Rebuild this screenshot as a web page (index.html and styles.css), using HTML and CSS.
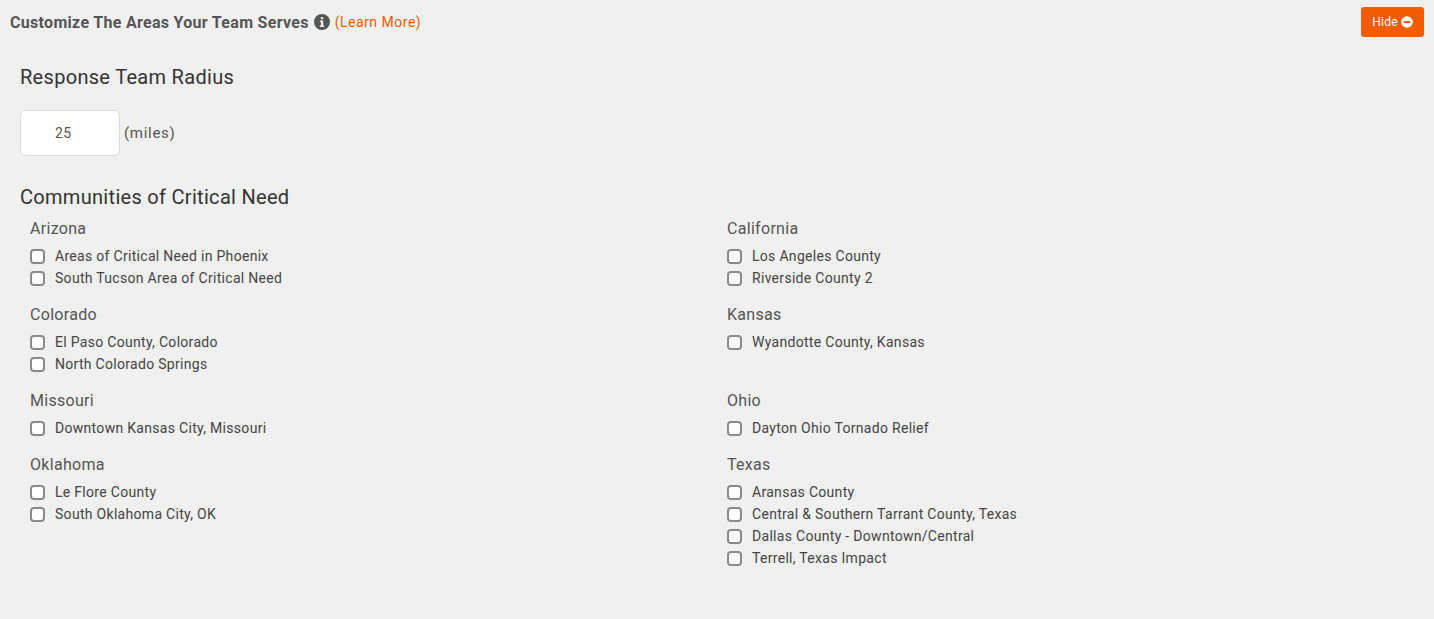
FILE: index.html
```html
<!DOCTYPE html>
<html lang="en">
<head>
  <meta charset="UTF-8" />
  <title>Customize The Areas Your Team Serves</title>
  <link rel="stylesheet" href="styles.css">
</head>
<body>
  <header class="bar">
    <div class="bar-title">
      <strong>Customize The Areas Your Team Serves</strong>
      <svg class="info-icon" viewBox="0 0 16 16" width="16" height="16">
        <circle cx="8" cy="8" r="8" fill="#555"/>
        <rect x="6.9" y="3" width="2.3" height="2.3" rx=".5" fill="#f0f0f0"/>
        <path d="M5.9 6.6h3.3v4.9h1v1.5H5.9v-1.5h1V8.1h-1z" fill="#f0f0f0"/>
      </svg>
      <a href="#" class="learn">(Learn More)</a>
    </div>
    <button class="hide-btn">Hide
      <svg viewBox="0 0 12 12" width="12" height="12">
        <circle cx="6" cy="6" r="5.8" fill="#fff"/>
        <rect x="2.6" y="4.9" width="6.8" height="2.2" rx=".4" fill="#f25c05"/>
      </svg>
    </button>
  </header>

  <main class="content">
    <h2 class="radius-title">Response Team Radius</h2>
    <div class="radius-row">
      <input type="text" class="radius-input" value="25">
      <span>(miles)</span>
    </div>

    <h2 class="need-title">Communities of Critical Need</h2>
    <div class="states">
      <section class="state">
        <h3>Arizona</h3>
        <label><input type="checkbox">Areas of Critical Need in Phoenix</label>
        <label><input type="checkbox">South Tucson Area of Critical Need</label>
      </section>
      <section class="state">
        <h3>California</h3>
        <label><input type="checkbox">Los Angeles County</label>
        <label><input type="checkbox">Riverside County 2</label>
      </section>
      <section class="state">
        <h3>Colorado</h3>
        <label><input type="checkbox">El Paso County, Colorado</label>
        <label><input type="checkbox">North Colorado Springs</label>
      </section>
      <section class="state">
        <h3>Kansas</h3>
        <label><input type="checkbox">Wyandotte County, Kansas</label>
      </section>
      <section class="state">
        <h3>Missouri</h3>
        <label><input type="checkbox">Downtown Kansas City, Missouri</label>
      </section>
      <section class="state">
        <h3>Ohio</h3>
        <label><input type="checkbox">Dayton Ohio Tornado Relief</label>
      </section>
      <section class="state">
        <h3>Oklahoma</h3>
        <label><input type="checkbox">Le Flore County</label>
        <label><input type="checkbox">South Oklahoma City, OK</label>
      </section>
      <section class="state">
        <h3>Texas</h3>
        <label><input type="checkbox">Aransas County</label>
        <label><input type="checkbox">Central &amp; Southern Tarrant County, Texas</label>
        <label><input type="checkbox">Dallas County - Downtown/Central</label>
        <label><input type="checkbox">Terrell, Texas Impact</label>
      </section>
    </div>
  </main>
</body>
</html>
```

FILE: styles.css
```css
body {
  margin: 0;
  height: 619px;
  overflow: hidden;
  background-color: #f0f0f0;
  color: #444;
  font-family: Roboto, sans-serif;
  letter-spacing: 0.3px;
}

.bar {
  display: flex;
  justify-content: space-between;
  align-items: flex-start;
  padding: 7px 10px 0;
}

.bar-title {
  display: flex;
  align-items: center;
  height: 30px;
  font-size: 14px;
}

.bar-title strong {
  font-size: 16px;
  font-weight: 700;
  color: #555;
}

.info-icon {
  margin: 0 5px;
}

.learn {
  color: #f25c05;
  letter-spacing: 0.5px;
  text-decoration: none;
}

.hide-btn {
  display: flex;
  align-items: center;
  gap: 3px;
  height: 30px;
  padding: 0 11px;
  border: none;
  border-radius: 3px;
  background-color: #f25c05;
  color: #fff;
  font-family: Roboto, sans-serif;
  font-size: 12px;
  font-weight: 400;
  letter-spacing: 0.3px;
}

.content {
  padding: 0 10px 0 20px;
}

h2 {
  margin: 0;
  font-size: 20px;
  font-weight: 400;
  line-height: 26px;
  color: #333;
}

.radius-title {
  margin-top: 27px;
}

.radius-row {
  display: flex;
  align-items: center;
  gap: 4px;
  margin-top: 20px;
  font-size: 15px;
  letter-spacing: 0.7px;
  color: #555;
}

.radius-input {
  box-sizing: border-box;
  width: 100px;
  height: 46px;
  padding: 0 0 0 34px;
  border: 1px solid #ddd;
  border-radius: 6px;
  background: #fff;
  color: #555;
  font-family: Roboto, sans-serif;
  font-size: 14px;
  letter-spacing: 0.3px;
}

.need-title {
  margin-top: 28px;
}

.states {
  display: grid;
  grid-template-columns: 697px 1fr;
  padding-left: 10px;
  margin-top: 7px;
}

.state {
  padding-bottom: 14px;
}

.state h3 {
  margin: 0 0 5px;
  font-size: 16px;
  font-weight: 400;
  line-height: 23px;
  color: #555;
}

.state label {
  display: flex;
  align-items: center;
  height: 22px;
  font-size: 14px;
  color: #444;
}

.state input {
  appearance: none;
  box-sizing: border-box;
  width: 15px;
  height: 15px;
  margin: 0 10px 0 0;
  border: 2px solid #8a8a8a;
  border-radius: 4px;
  background: #fff;
}
```
